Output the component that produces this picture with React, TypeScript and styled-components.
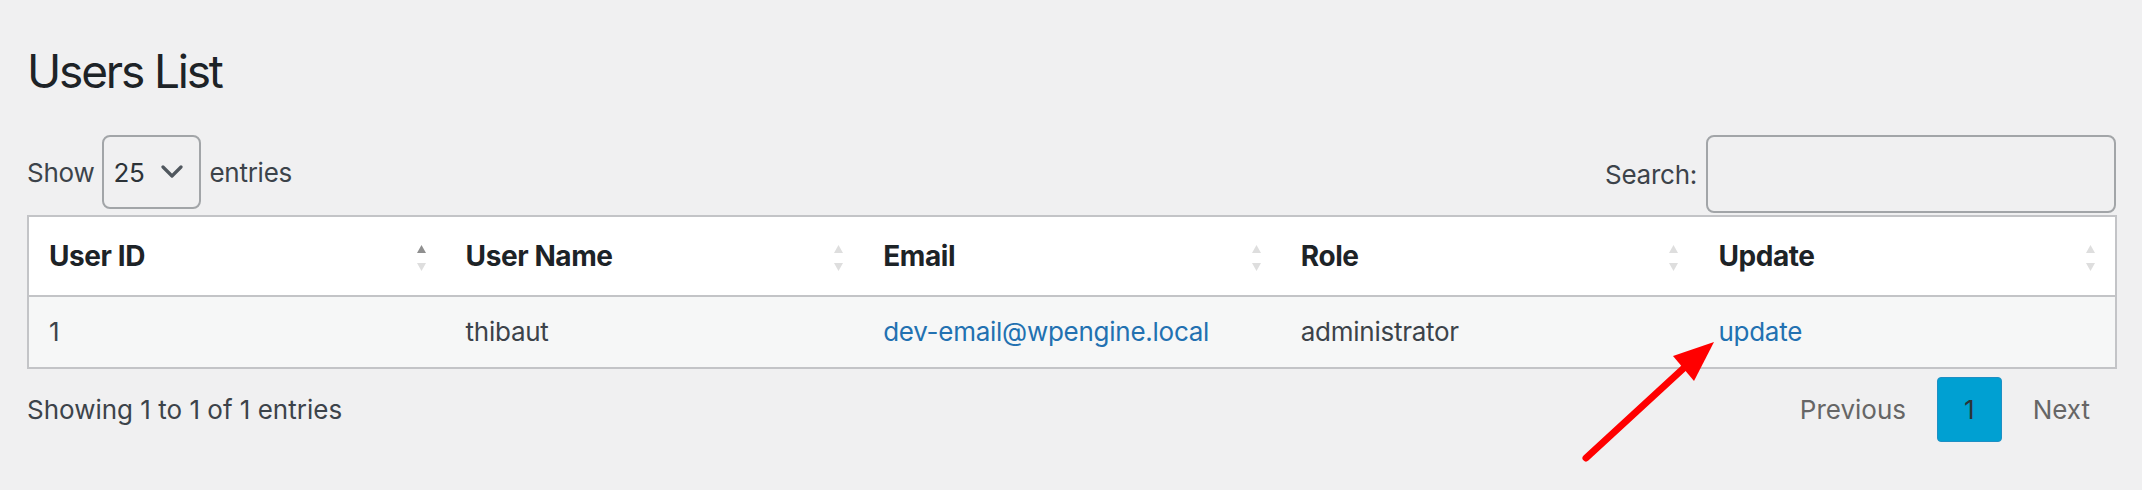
import React from "react";
import styled, { createGlobalStyle } from "styled-components";

const GlobalStyle = createGlobalStyle`
  html, body {
    margin: 0;
    padding: 0;
    background: #f0f0f1;
  }
  body {
    font-family: Inter, "Noto Sans", Roboto, sans-serif;
    color: #3c434a;
    font-size: 26px;
  }
  * { box-sizing: border-box; }
`;

const Page = styled.div`
  position: relative;
  padding: 41px 25px 0 27px;
  min-height: 490px;
`;

const Title = styled.h1`
  margin: 0;
  font-size: 46px;
  line-height: 60px;
  font-weight: 400;
  letter-spacing: -0.047em;
  color: #1d2327;
`;

const Toolbar = styled.div`
  display: flex;
  justify-content: space-between;
  align-items: flex-start;
  margin-top: 34px;
`;

const Group = styled.label<{ $gap: number }>`
  display: flex;
  align-items: center;
  gap: ${(p) => p.$gap}px;
  font-size: 26px;
  letter-spacing: -0.01em;
  color: #3c434a;
`;

const SelectBox = styled.div`
  display: flex;
  align-items: center;
  justify-content: space-between;
  width: 99px;
  height: 74px;
  padding: 0 16px 0 9px;
  border: 2px solid #a2a5a8;
  border-radius: 8px;
  color: #2c3338;
`;

const SearchInput = styled.div`
  width: 410px;
  height: 78px;
  margin-right: 1px;
  border: 2px solid #a2a5a8;
  border-radius: 8px;
  background: #f0f0f1;
`;

const Table = styled.table`
  width: 100%;
  margin-top: 2px;
  table-layout: fixed;
  border-collapse: collapse;
  border: 2px solid #c3c4c7;
`;

const HeadCell = styled.th`
  position: relative;
  padding: 20px 36px 20px 20px;
  line-height: 38px;
  font-size: 28px;
  font-weight: 700;
  letter-spacing: -0.015em;
  text-align: left;
  color: #1d2327;
  background: #fff;
  border-bottom: 2px solid #c3c4c7;
`;

const SortIcon = styled.svg`
  position: absolute;
  right: 20px;
  top: 28px;
  width: 9px;
  height: 27px;
`;

const Row = styled.tr`
  background: #f6f7f7;
`;

const Cell = styled.td`
  padding: 16px 20px;
  line-height: 38px;
  font-size: 26px;
  letter-spacing: -0.01em;
  color: #3c434a;
`;

const Link = styled.a`
  color: #2271b1;
  text-decoration: none;
`;

const Footer = styled.div`
  display: flex;
  justify-content: space-between;
  align-items: center;
  margin-top: 8px;
`;

const Info = styled.div`
  font-size: 26px;
  color: #3c434a;
`;

const Paginate = styled.div`
  display: flex;
  align-items: center;
`;

const PageButton = styled.span<{ $current?: boolean }>`
  margin-left: 4px;
  padding: 13px 26px;
  line-height: 37px;
  font-size: 26px;
  border: 1px solid ${(p) => (p.$current ? "#1e8fc4" : "transparent")};
  border-radius: 4px;
  background: ${(p) => (p.$current ? "#00a0d2" : "transparent")};
  color: ${(p) => (p.$current ? "#2c3338" : "#666")};
`;

const ArrowOverlay = styled.svg`
  position: absolute;
  left: 1570px;
  top: 330px;
  width: 160px;
  height: 140px;
  pointer-events: none;
`;

const Chevron = () => (
  <svg width="22" height="14" viewBox="0 0 22 14">
    <path d="M2 2 L11 11 L20 2" fill="none" stroke="#50575e" strokeWidth="3.2" strokeLinecap="round" strokeLinejoin="round" />
  </svg>
);

const Sort = ({ active }: { active?: boolean }) => (
  <SortIcon viewBox="0 0 9 27">
    <path d="M4.5 0 L9 8 L0 8 Z" fill={active ? "#8f8f8f" : "#dedede"} />
    <path d="M0 18 L9 18 L4.5 26 Z" fill="#dedede" />
  </SortIcon>
);

const columns = ["User ID", "User Name", "Email", "Role", "Update"];

export default function App() {
  return (
    <>
      <GlobalStyle />
      <Page>
        <Title>Users List</Title>
        <Toolbar>
          <Group $gap={8}>
            Show
            <SelectBox>
              <span>25</span>
              <Chevron />
            </SelectBox>
            entries
          </Group>
          <Group $gap={9}>
            Search:
            <SearchInput />
          </Group>
        </Toolbar>
        <Table>
          <thead>
            <tr>
              {columns.map((c, i) => (
                <HeadCell key={c}>
                  {c}
                  <Sort active={i === 0} />
                </HeadCell>
              ))}
            </tr>
          </thead>
          <tbody>
            <Row>
              <Cell>1</Cell>
              <Cell>thibaut</Cell>
              <Cell>
                <Link href="#">dev-email@wpengine.local</Link>
              </Cell>
              <Cell>administrator</Cell>
              <Cell>
                <Link href="#">update</Link>
              </Cell>
            </Row>
          </tbody>
        </Table>
        <Footer>
          <Info>Showing 1 to 1 of 1 entries</Info>
          <Paginate>
            <PageButton>Previous</PageButton>
            <PageButton $current>1</PageButton>
            <PageButton>Next</PageButton>
          </Paginate>
        </Footer>
        <ArrowOverlay viewBox="0 0 160 140">
          <line x1="16" y1="128" x2="116" y2="36" stroke="#ff0000" strokeWidth="7" strokeLinecap="round" />
          <path d="M144 12 L103 26 L124 51 Z" fill="#ff0000" />
        </ArrowOverlay>
      </Page>
    </>
  );
}
